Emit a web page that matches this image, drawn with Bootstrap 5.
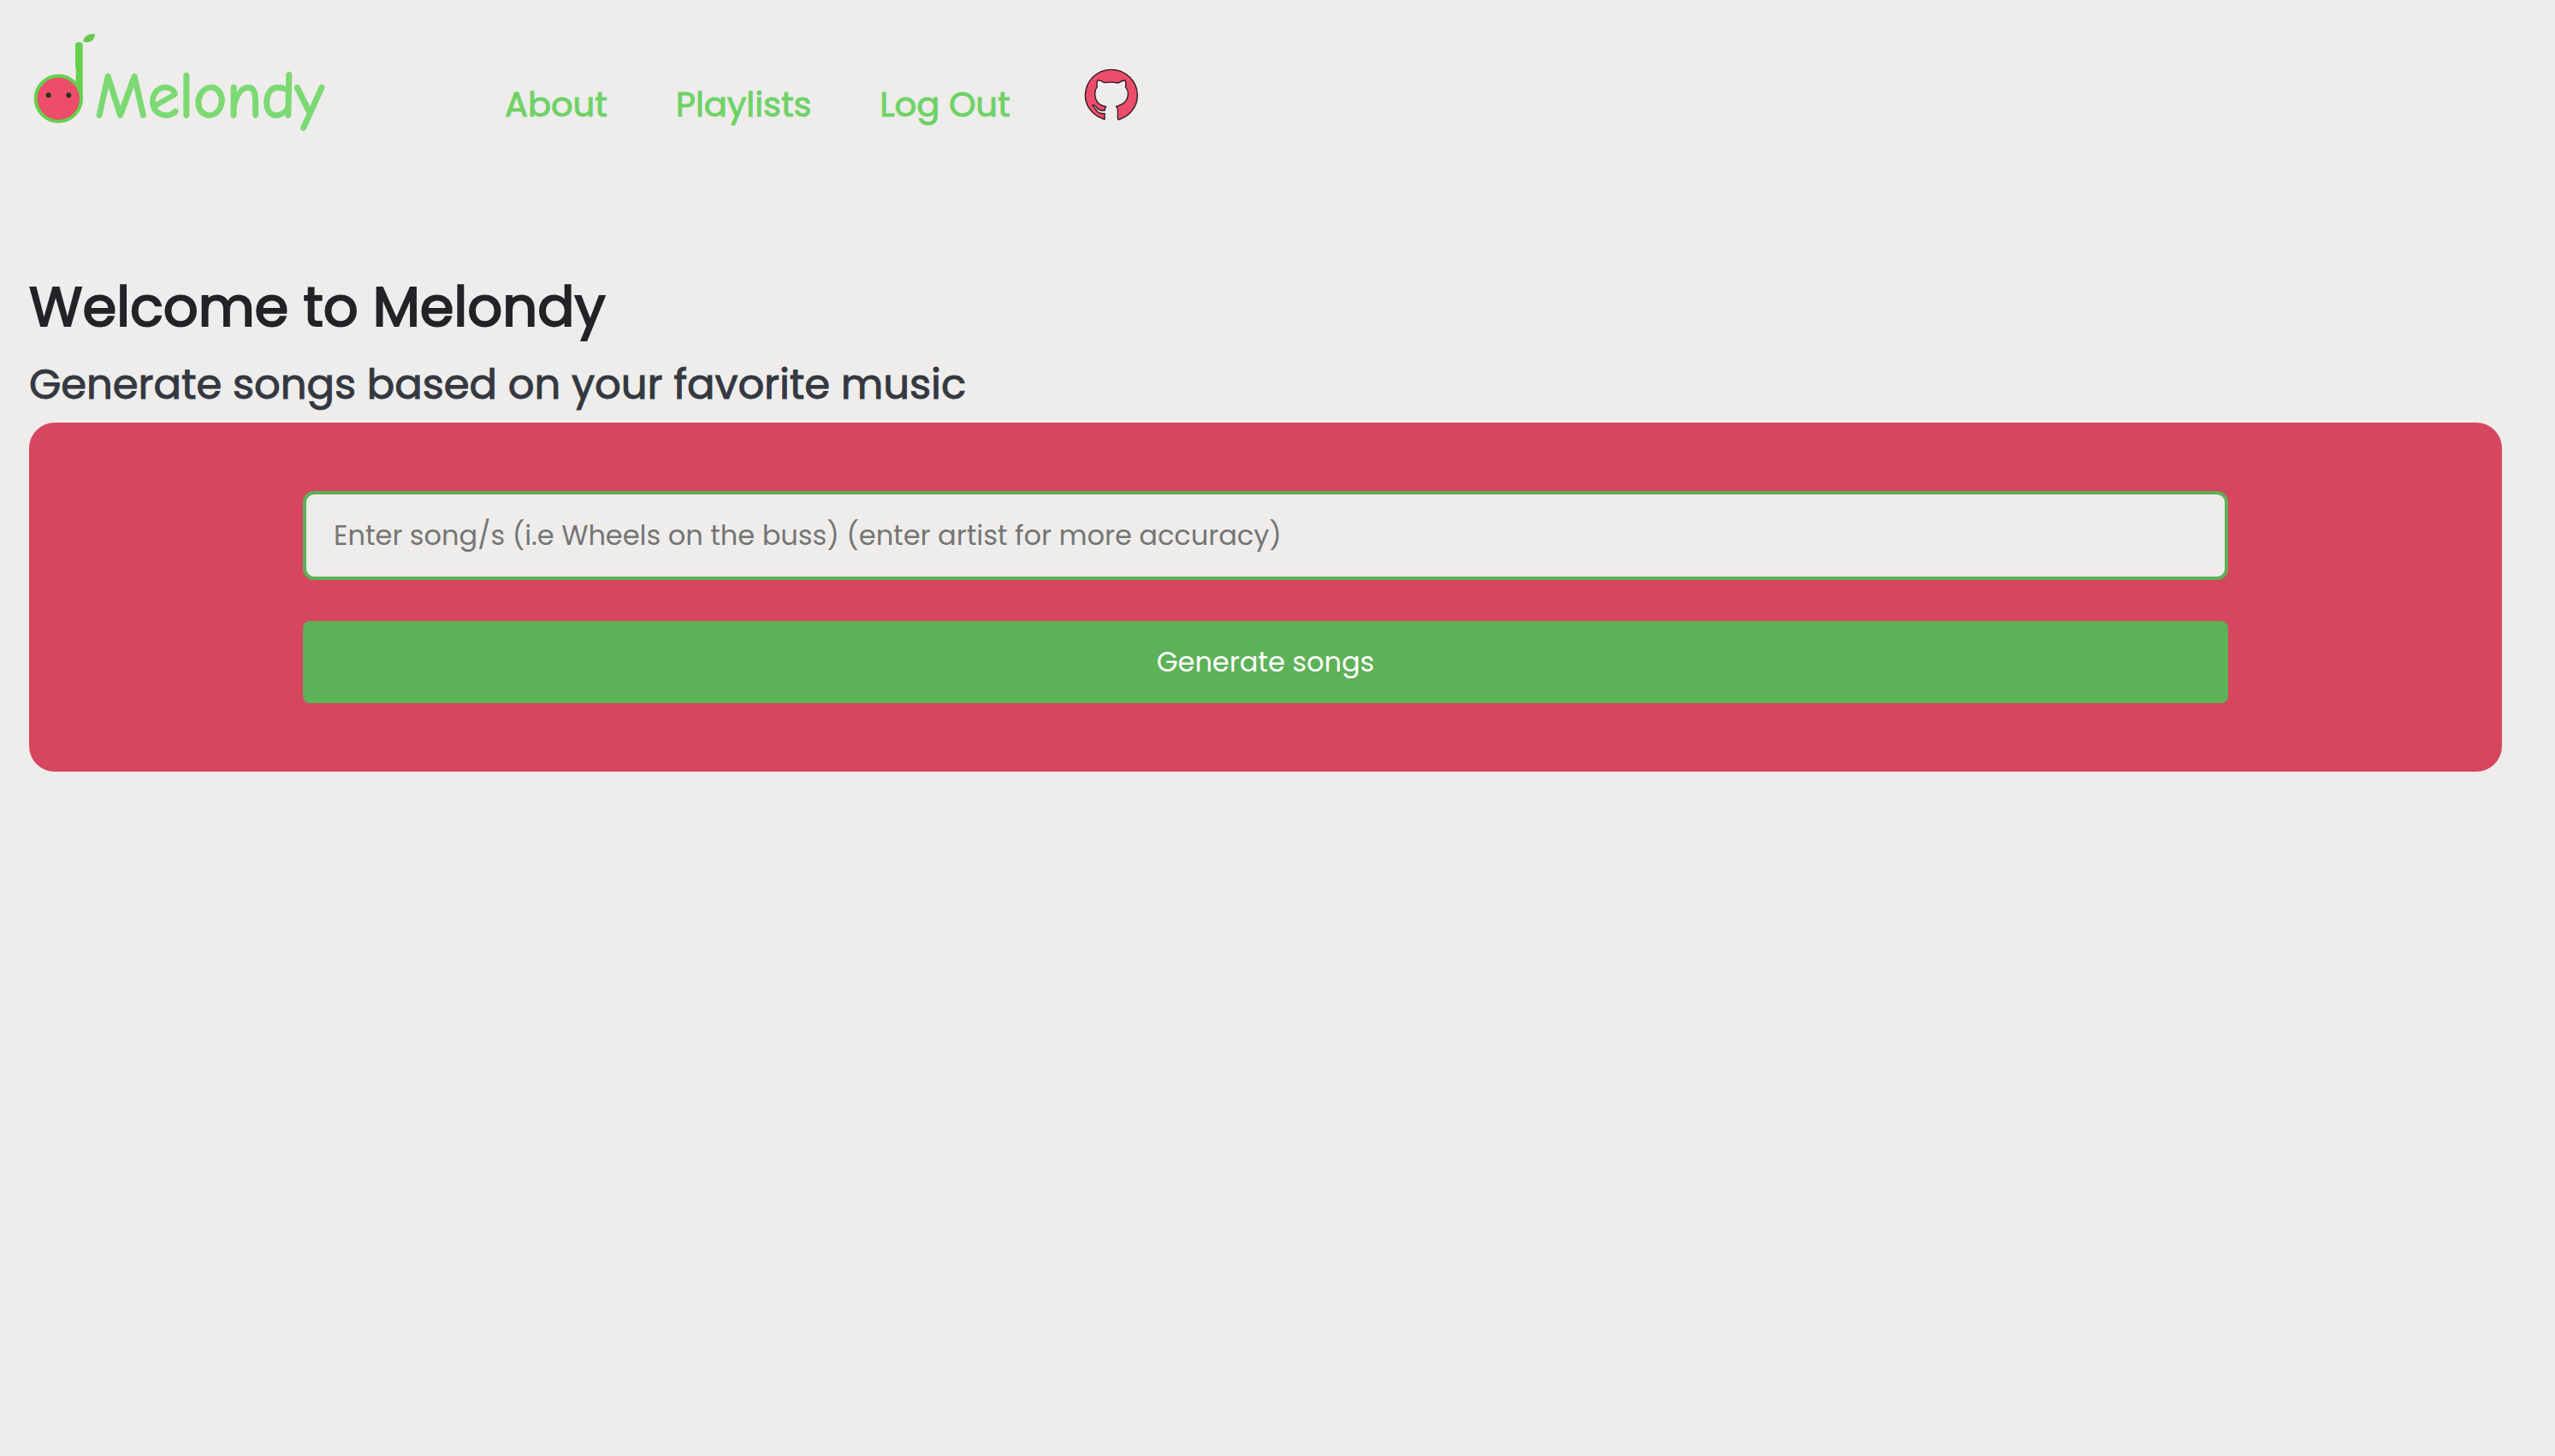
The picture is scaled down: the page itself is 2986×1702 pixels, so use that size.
<!DOCTYPE html>
<html lang="en">
<head>
<meta charset="utf-8">
<meta name="viewport" content="width=device-width, initial-scale=1">
<title>Melondy</title>
<link href="https://cdn.jsdelivr.net/npm/bootstrap@5.3.0/dist/css/bootstrap.min.css" rel="stylesheet">
<style>
  body { background: #eeedeb; font-family: Poppins, Inter, "Open Sans", sans-serif; color: #212326; }
  .site-nav { padding: 38px 34px 0; }
  .brand-logo { width: 360px; height: 120px; overflow: visible; }
  .site-links { margin-left: 196px; padding-top: 42px; gap: 80px; }
  .site-links .nav-link { color: #6fd267; font-size: 40px; line-height: 84px; font-weight: 400; padding: 0; -webkit-text-stroke: 1px #6fd267; }
  .github-mark { width: 64px; height: 62px; margin-left: 6px; }
  .site-main { padding: 156px 62px 0 34px; }
  .page-title { font-size: 64px; line-height: 78px; font-weight: 400; margin: 0 0 22px; -webkit-text-stroke: 2px #212326; }
  .page-subtitle { font-size: 48px; line-height: 60px; font-weight: 400; color: #343841; margin: 0 0 14px; -webkit-text-stroke: 1px #343841; }
  .song-form { background: #d6465f; border-radius: 30px; padding: 80px 320px; gap: 48px; }
  .song-input { background: #eeedeb; border: 4px solid #5db157; border-radius: 13px; height: 104px; padding: 0 32px; font-size: 32px; color: #212326; }
  .song-input:focus { background: #eeedeb; border-color: #5db157; }
  .song-input::placeholder { color: #757575; opacity: 1; }
  .song-btn { background: #5db157; color: #fff; border: 0; border-radius: 8px; height: 96px; font-size: 32px; }
  .song-btn:hover { background: #4f9f4a; color: #fff; }
</style>
</head>
<body>
<nav class="site-nav d-flex align-items-start">
  <a href="#" aria-label="Melondy home">
    <svg class="brand-logo d-block" viewBox="42 54 1080 360">
      <path d="M204 94Q207 88 217 88T230 94V300H206V178H204Z" fill="#66d04e"/>
      <circle cx="145" cy="286" r="80" fill="#eb4d6a" stroke="#66d04e" stroke-width="12"/>
      <circle cx="110" cy="274" r="9" fill="#253322"/>
      <circle cx="181" cy="274" r="9" fill="#253322"/>
      <path d="M231 85C235 68 250 56 273 60C272 80 256 91 237 88Z" fill="#66c94e"/>
      <text x="272" y="352" font-family="'Comic Neue', 'Comic Sans MS', Lato, sans-serif" font-size="222" fill="#7cd974" stroke="#7cd974" stroke-width="7" stroke-linejoin="round">Melondy</text>
    </svg>
  </a>
  <div class="site-links nav d-flex flex-nowrap">
    <a class="nav-link" href="#">About</a>
    <a class="nav-link" href="#">Playlists</a>
    <a class="nav-link" href="#">Log Out</a>
    <a class="nav-link" href="#" aria-label="GitHub">
      <svg class="github-mark d-block" viewBox="50 30 192 186">
        <path fill="#eb4d6a" stroke="#2a1a20" stroke-width="4" stroke-linejoin="round" d="M122 209C80 196 54 162 54 125C54 75 94 34 145 34C196 34 237 75 237 125C237 162 212 196 174 209Q168 211 168 205V178Q168 168 162 163C185 158 204 148 204 118C204 108 200 101 195 95Q198 82 194 72Q185 71 170 81Q145 76 121 80Q107 70 97 72Q93 84 96 95Q88 104 88 118C88 148 102 160 127 164Q122 170 122 178Q102 180 94 166Q88 157 79 159Q86 163 90 172Q98 190 122 188Z"/>
      </svg>
    </a>
  </div>
</nav>
<main class="site-main">
  <h1 class="page-title">Welcome to Melondy</h1>
  <h2 class="page-subtitle">Generate songs based on your favorite music</h2>
  <form class="song-form d-flex flex-column">
    <input class="song-input form-control shadow-none" id="songs" type="text" aria-label="Songs" placeholder="Enter song/s (i.e Wheels on the buss) (enter artist for more accuracy)">
    <button class="song-btn btn w-100" type="button">Generate songs</button>
  </form>
</main>
<script src="https://cdn.jsdelivr.net/npm/bootstrap@5.3.0/dist/js/bootstrap.bundle.min.js"></script>
</body>
</html>
